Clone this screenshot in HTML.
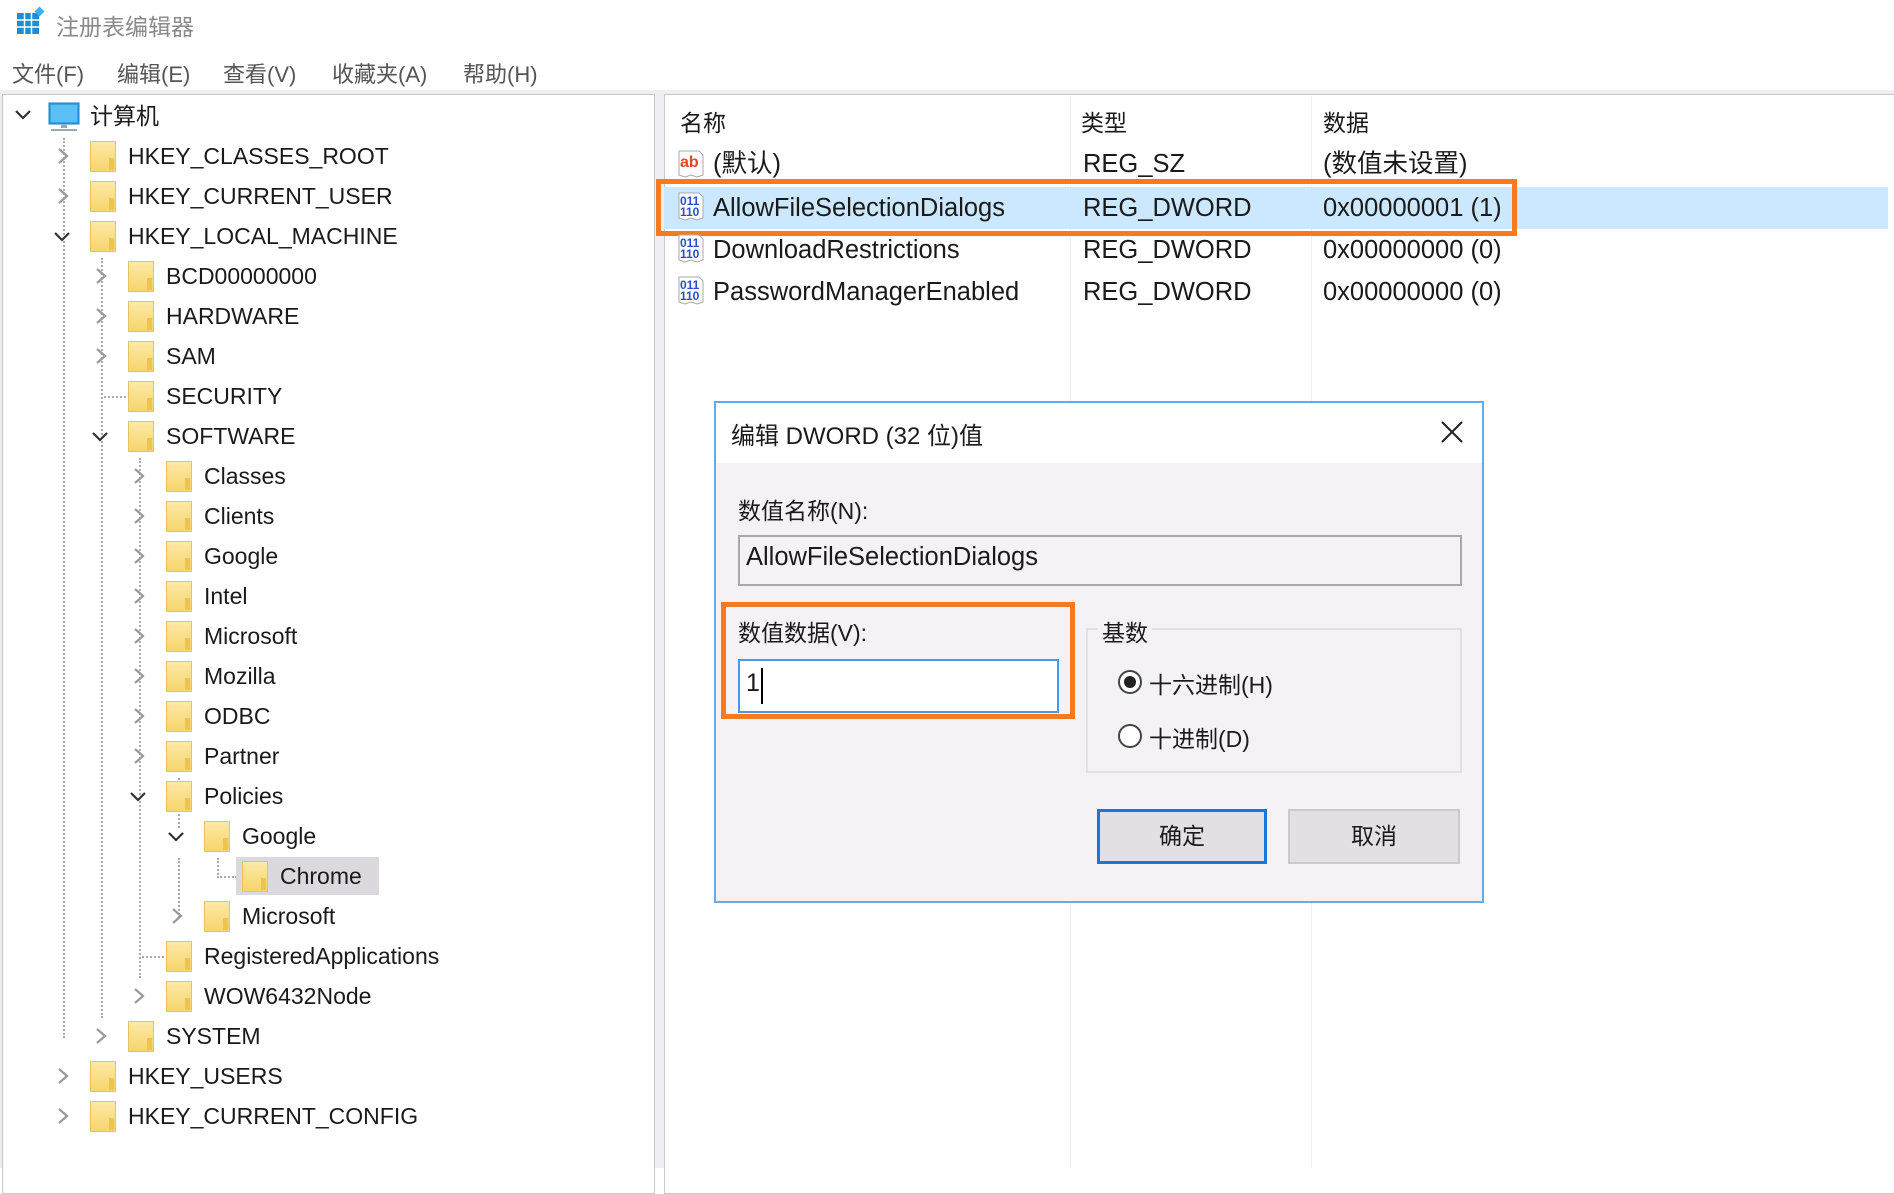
<!DOCTYPE html>
<html><head><meta charset="utf-8">
<style>
*{margin:0;padding:0;box-sizing:border-box}
body{width:1894px;height:1168px;overflow:hidden;background:#fff;font-family:"Liberation Sans","Noto Sans CJK SC",sans-serif;color:#1a1a1a;position:relative}
.a{position:absolute;white-space:nowrap}
.t{font-size:23px;line-height:40px;height:40px}
.r{font-size:25.5px;line-height:40px;height:40px}
.fold{position:absolute;width:26px;height:31px;background:linear-gradient(#fde9a6,#f7d56c);border:1px solid #e8c25a;border-radius:1px}
.fold:after{content:"";position:absolute;right:1px;bottom:1px;width:5px;height:12px;background:#eec44f}
.chev{position:absolute;width:14px;height:18px}
.dl{position:absolute;border-left:2px dotted #aaa}
.dh{position:absolute;border-top:2px dotted #aaa}
</style></head><body>
<svg class="a" style="left:16px;top:6px" width="30" height="30" viewBox="0 0 30 30">
<rect x="1" y="7" width="22" height="21" fill="#1a8fd6"/>
<g stroke="#fff" stroke-width="1.5"><line x1="8.5" y1="7" x2="8.5" y2="28"/><line x1="15.5" y1="7" x2="15.5" y2="28"/><line x1="1" y1="14" x2="23" y2="14"/><line x1="1" y1="21" x2="23" y2="21"/></g>
<rect x="20" y="2" width="7" height="7" fill="#3ab0f0" transform="rotate(45 23.5 5.5)"/>
</svg>
<div class="a" style="left:56px;top:8px;font-size:23px;color:#8a8a8a">注册表编辑器</div>
<div class="a" style="left:12px;top:57px;font-size:22px;color:#555">文件(F)</div>
<div class="a" style="left:117px;top:57px;font-size:22px;color:#555">编辑(E)</div>
<div class="a" style="left:223px;top:57px;font-size:22px;color:#555">查看(V)</div>
<div class="a" style="left:332px;top:57px;font-size:22px;color:#555">收藏夹(A)</div>
<div class="a" style="left:463px;top:57px;font-size:22px;color:#555">帮助(H)</div>
<div class="a" style="left:0;top:90px;width:1894px;height:1078px;background:#f0eef2"></div>
<div class="a" style="left:2px;top:94px;width:653px;height:1100px;background:#fff;border:1px solid #c8c8cc"></div>
<div class="a" style="left:664px;top:94px;width:1240px;height:1100px;background:#fff;border:1px solid #c8c8cc"></div>

<div class="dl" style="left:63px;top:138px;height:900px"></div>
<div class="dl" style="left:101px;top:258px;height:760px"></div>
<div class="dl" style="left:139px;top:458px;height:520px"></div>
<div class="dl" style="left:178px;top:858px;height:60px"></div>
<div class="dl" style="left:178px;top:778px;height:50px"></div>
<div class="dl" style="left:217px;top:858px;height:20px"></div>
<div class="dh" style="left:217px;top:876px;width:20px"></div>
<div class="dh" style="left:104px;top:396px;width:22px"></div>
<div class="dh" style="left:142px;top:956px;width:22px"></div>

<svg class="chev" style="left:14px;top:108px;width:18px;height:14px" viewBox="0 0 18 14"><path d="M2 3 L9 10 L16 3" fill="none" stroke="#333" stroke-width="2.2"/></svg>
<svg class="a" style="left:47px;top:102px" width="34" height="32" viewBox="0 0 34 32"><rect x="2" y="1" width="30" height="21" fill="#2fa4e7" stroke="#1c7cc0"/><rect x="4" y="3" width="26" height="17" fill="#5cc0f5"/><rect x="14" y="22" width="6" height="4" fill="#9ab"/><rect x="4" y="27" width="26" height="2" fill="#9ab"/></svg>
<div class="a t" style="left:90px;top:96px">计算机</div>

<div class="a" style="left:236px;top:857px;width:143px;height:38px;background:#dcd9de"></div>

<svg class="chev" style="left:56px;top:147px" viewBox="0 0 14 18"><path d="M3 2 L11 9 L3 16" fill="none" stroke="#999" stroke-width="2.2"/></svg>
<div class="fold" style="left:90px;top:141px"></div><div class="a t" style="left:128px;top:136px">HKEY_CLASSES_ROOT</div>
<svg class="chev" style="left:56px;top:187px" viewBox="0 0 14 18"><path d="M3 2 L11 9 L3 16" fill="none" stroke="#999" stroke-width="2.2"/></svg>
<div class="fold" style="left:90px;top:181px"></div><div class="a t" style="left:128px;top:176px">HKEY_CURRENT_USER</div>
<svg class="chev" style="left:53px;top:230px;width:18px;height:14px" viewBox="0 0 18 14"><path d="M2 3 L9 10 L16 3" fill="none" stroke="#333" stroke-width="2.2"/></svg>
<div class="fold" style="left:90px;top:221px"></div><div class="a t" style="left:128px;top:216px">HKEY_LOCAL_MACHINE</div>

<svg class="chev" style="left:94px;top:267px" viewBox="0 0 14 18"><path d="M3 2 L11 9 L3 16" fill="none" stroke="#999" stroke-width="2.2"/></svg>
<div class="fold" style="left:128px;top:261px"></div><div class="a t" style="left:166px;top:256px">BCD00000000</div>
<svg class="chev" style="left:94px;top:307px" viewBox="0 0 14 18"><path d="M3 2 L11 9 L3 16" fill="none" stroke="#999" stroke-width="2.2"/></svg>
<div class="fold" style="left:128px;top:301px"></div><div class="a t" style="left:166px;top:296px">HARDWARE</div>
<svg class="chev" style="left:94px;top:347px" viewBox="0 0 14 18"><path d="M3 2 L11 9 L3 16" fill="none" stroke="#999" stroke-width="2.2"/></svg>
<div class="fold" style="left:128px;top:341px"></div><div class="a t" style="left:166px;top:336px">SAM</div>
<div class="fold" style="left:128px;top:381px"></div><div class="a t" style="left:166px;top:376px">SECURITY</div>
<svg class="chev" style="left:91px;top:430px;width:18px;height:14px" viewBox="0 0 18 14"><path d="M2 3 L9 10 L16 3" fill="none" stroke="#333" stroke-width="2.2"/></svg>
<div class="fold" style="left:128px;top:421px"></div><div class="a t" style="left:166px;top:416px">SOFTWARE</div>

<svg class="chev" style="left:132px;top:467px" viewBox="0 0 14 18"><path d="M3 2 L11 9 L3 16" fill="none" stroke="#999" stroke-width="2.2"/></svg>
<div class="fold" style="left:166px;top:461px"></div><div class="a t" style="left:204px;top:456px">Classes</div>
<svg class="chev" style="left:132px;top:507px" viewBox="0 0 14 18"><path d="M3 2 L11 9 L3 16" fill="none" stroke="#999" stroke-width="2.2"/></svg>
<div class="fold" style="left:166px;top:501px"></div><div class="a t" style="left:204px;top:496px">Clients</div>
<svg class="chev" style="left:132px;top:547px" viewBox="0 0 14 18"><path d="M3 2 L11 9 L3 16" fill="none" stroke="#999" stroke-width="2.2"/></svg>
<div class="fold" style="left:166px;top:541px"></div><div class="a t" style="left:204px;top:536px">Google</div>
<svg class="chev" style="left:132px;top:587px" viewBox="0 0 14 18"><path d="M3 2 L11 9 L3 16" fill="none" stroke="#999" stroke-width="2.2"/></svg>
<div class="fold" style="left:166px;top:581px"></div><div class="a t" style="left:204px;top:576px">Intel</div>
<svg class="chev" style="left:132px;top:627px" viewBox="0 0 14 18"><path d="M3 2 L11 9 L3 16" fill="none" stroke="#999" stroke-width="2.2"/></svg>
<div class="fold" style="left:166px;top:621px"></div><div class="a t" style="left:204px;top:616px">Microsoft</div>
<svg class="chev" style="left:132px;top:667px" viewBox="0 0 14 18"><path d="M3 2 L11 9 L3 16" fill="none" stroke="#999" stroke-width="2.2"/></svg>
<div class="fold" style="left:166px;top:661px"></div><div class="a t" style="left:204px;top:656px">Mozilla</div>
<svg class="chev" style="left:132px;top:707px" viewBox="0 0 14 18"><path d="M3 2 L11 9 L3 16" fill="none" stroke="#999" stroke-width="2.2"/></svg>
<div class="fold" style="left:166px;top:701px"></div><div class="a t" style="left:204px;top:696px">ODBC</div>
<svg class="chev" style="left:132px;top:747px" viewBox="0 0 14 18"><path d="M3 2 L11 9 L3 16" fill="none" stroke="#999" stroke-width="2.2"/></svg>
<div class="fold" style="left:166px;top:741px"></div><div class="a t" style="left:204px;top:736px">Partner</div>
<svg class="chev" style="left:129px;top:790px;width:18px;height:14px" viewBox="0 0 18 14"><path d="M2 3 L9 10 L16 3" fill="none" stroke="#333" stroke-width="2.2"/></svg>
<div class="fold" style="left:166px;top:781px"></div><div class="a t" style="left:204px;top:776px">Policies</div>

<svg class="chev" style="left:167px;top:830px;width:18px;height:14px" viewBox="0 0 18 14"><path d="M2 3 L9 10 L16 3" fill="none" stroke="#333" stroke-width="2.2"/></svg>
<div class="fold" style="left:204px;top:821px"></div><div class="a t" style="left:242px;top:816px">Google</div>
<div class="fold" style="left:242px;top:861px"></div><div class="a t" style="left:280px;top:856px">Chrome</div>
<svg class="chev" style="left:170px;top:907px" viewBox="0 0 14 18"><path d="M3 2 L11 9 L3 16" fill="none" stroke="#999" stroke-width="2.2"/></svg>
<div class="fold" style="left:204px;top:901px"></div><div class="a t" style="left:242px;top:896px">Microsoft</div>

<div class="fold" style="left:166px;top:941px"></div><div class="a t" style="left:204px;top:936px">RegisteredApplications</div>
<svg class="chev" style="left:132px;top:987px" viewBox="0 0 14 18"><path d="M3 2 L11 9 L3 16" fill="none" stroke="#999" stroke-width="2.2"/></svg>
<div class="fold" style="left:166px;top:981px"></div><div class="a t" style="left:204px;top:976px">WOW6432Node</div>
<svg class="chev" style="left:94px;top:1027px" viewBox="0 0 14 18"><path d="M3 2 L11 9 L3 16" fill="none" stroke="#999" stroke-width="2.2"/></svg>
<div class="fold" style="left:128px;top:1021px"></div><div class="a t" style="left:166px;top:1016px">SYSTEM</div>
<svg class="chev" style="left:56px;top:1067px" viewBox="0 0 14 18"><path d="M3 2 L11 9 L3 16" fill="none" stroke="#999" stroke-width="2.2"/></svg>
<div class="fold" style="left:90px;top:1061px"></div><div class="a t" style="left:128px;top:1056px">HKEY_USERS</div>
<svg class="chev" style="left:56px;top:1107px" viewBox="0 0 14 18"><path d="M3 2 L11 9 L3 16" fill="none" stroke="#999" stroke-width="2.2"/></svg>
<div class="fold" style="left:90px;top:1101px"></div><div class="a t" style="left:128px;top:1096px">HKEY_CURRENT_CONFIG</div>

<div class="a" style="left:1070px;top:96px;width:1px;height:1072px;background:#eef0f4"></div>
<div class="a" style="left:1311px;top:96px;width:1px;height:1072px;background:#eef0f4"></div>
<div class="a" style="left:680px;top:104px;font-size:23px">名称</div>
<div class="a" style="left:1081px;top:104px;font-size:23px">类型</div>
<div class="a" style="left:1323px;top:104px;font-size:23px">数据</div>
<div class="a" style="left:664px;top:187px;width:1224px;height:42px;background:#cce8ff"></div>
<div class="a" style="left:656px;top:179px;width:861px;height:57px;border:5px solid #f97a1e"></div>

<svg class="a" style="left:677px;top:150px" width="28" height="28" viewBox="0 0 28 28"><path d="M2 1 H22 L26 5 V25 L20 27 L14 25 L8 27 L2 25 Z" fill="#fff" stroke="#aaa"/><text x="3" y="17" font-family="Liberation Sans" font-weight="bold" font-size="16" fill="#e0472b">ab</text></svg>
<div class="a r" style="left:713px;top:144px">(默认)</div>
<div class="a r" style="left:1083px;top:144px">REG_SZ</div>
<div class="a r" style="left:1323px;top:144px">(数值未设置)</div>

<svg class="a" style="left:677px;top:192px" width="28" height="30" viewBox="0 0 28 30"><path d="M2 1 H22 L26 5 V26 L20 28 L14 26 L8 28 L2 26 Z" fill="#fff" stroke="#aaa"/><text x="3" y="13" font-family="Liberation Sans" font-weight="bold" font-size="12" fill="#2a4fcc">011</text><text x="3" y="24" font-family="Liberation Sans" font-weight="bold" font-size="12" fill="#2a4fcc">110</text></svg>
<div class="a r" style="left:713px;top:188px">AllowFileSelectionDialogs</div>
<div class="a r" style="left:1083px;top:188px">REG_DWORD</div>
<div class="a r" style="left:1323px;top:188px">0x00000001 (1)</div>

<svg class="a" style="left:677px;top:234px" width="28" height="30" viewBox="0 0 28 30"><path d="M2 1 H22 L26 5 V26 L20 28 L14 26 L8 28 L2 26 Z" fill="#fff" stroke="#aaa"/><text x="3" y="13" font-family="Liberation Sans" font-weight="bold" font-size="12" fill="#2a4fcc">011</text><text x="3" y="24" font-family="Liberation Sans" font-weight="bold" font-size="12" fill="#2a4fcc">110</text></svg>
<div class="a r" style="left:713px;top:230px">DownloadRestrictions</div>
<div class="a r" style="left:1083px;top:230px">REG_DWORD</div>
<div class="a r" style="left:1323px;top:230px">0x00000000 (0)</div>

<svg class="a" style="left:677px;top:276px" width="28" height="30" viewBox="0 0 28 30"><path d="M2 1 H22 L26 5 V26 L20 28 L14 26 L8 28 L2 26 Z" fill="#fff" stroke="#aaa"/><text x="3" y="13" font-family="Liberation Sans" font-weight="bold" font-size="12" fill="#2a4fcc">011</text><text x="3" y="24" font-family="Liberation Sans" font-weight="bold" font-size="12" fill="#2a4fcc">110</text></svg>
<div class="a r" style="left:713px;top:272px">PasswordManagerEnabled</div>
<div class="a r" style="left:1083px;top:272px">REG_DWORD</div>
<div class="a r" style="left:1323px;top:272px">0x00000000 (0)</div>

<div class="a" style="left:714px;top:401px;width:770px;height:502px;background:#f5f2f6;border:2px solid #6aa9e6"></div>
<div class="a" style="left:716px;top:403px;width:766px;height:60px;background:#fff"></div>
<div class="a" style="left:731px;top:416px;font-size:24px">编辑 DWORD (32 位)值</div>
<svg class="a" style="left:1439px;top:419px" width="26" height="26" viewBox="0 0 26 26"><path d="M3 3 L23 23 M23 3 L3 23" stroke="#222" stroke-width="2"/></svg>
<div class="a" style="left:738px;top:492px;font-size:23px">数值名称(N):</div>
<div class="a" style="left:738px;top:535px;width:724px;height:51px;border:2px solid #a8a8a8;background:#f5f2f6"></div>
<div class="a" style="left:746px;top:543px;font-size:25.5px">AllowFileSelectionDialogs</div>
<div class="a" style="left:721px;top:602px;width:354px;height:117px;border:5px solid #f97a1e"></div>
<div class="a" style="left:738px;top:614px;font-size:23px">数值数据(V):</div>
<div class="a" style="left:738px;top:659px;width:321px;height:54px;border:2px solid #4a98e6;background:#fff"></div>
<div class="a" style="left:746px;top:669px;font-size:25px">1</div>
<div class="a" style="left:761px;top:668px;width:2px;height:36px;background:#000"></div>
<div class="a" style="left:1086px;top:628px;width:376px;height:145px;border:2px solid #e2e0e4"></div>
<div class="a" style="left:1098px;top:614px;font-size:23px;background:#f5f2f6;padding:0 4px">基数</div>
<div class="a" style="left:1118px;top:670px;width:24px;height:24px;border:2px solid #444;border-radius:50%;background:#fff"></div>
<div class="a" style="left:1124px;top:676px;width:12px;height:12px;border-radius:50%;background:#222"></div>
<div class="a" style="left:1149px;top:666px;font-size:23px">十六进制(H)</div>
<div class="a" style="left:1118px;top:724px;width:24px;height:24px;border:2px solid #444;border-radius:50%;background:#fff"></div>
<div class="a" style="left:1149px;top:720px;font-size:23px">十进制(D)</div>
<div class="a" style="left:1097px;top:809px;width:170px;height:55px;border:3px solid #1877d8;background:#e3e0e5;text-align:center;line-height:49px;font-size:23px">确定</div>
<div class="a" style="left:1288px;top:809px;width:172px;height:55px;border:2px solid #cacaca;background:#e3e0e5;text-align:center;line-height:51px;font-size:23px">取消</div>
</body></html>
